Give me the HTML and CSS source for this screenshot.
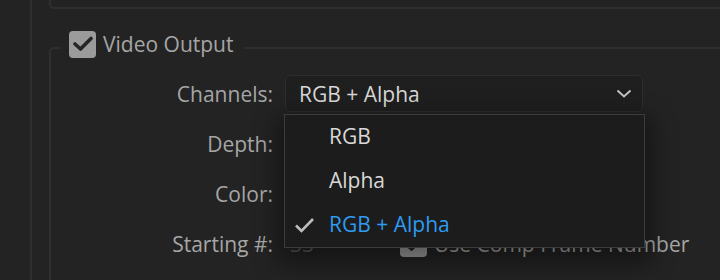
FILE: index.html
```html
<!DOCTYPE html>
<html lang="en">
<head>
  <meta charset="UTF-8" />
  <title>Output Module Settings</title>
  <link rel="stylesheet" href="styles.css">
</head>
<body>
  <div class="panel">
    <div class="top-box"></div>

    <fieldset class="group">
      <legend class="group-title">
        <span class="checkbox"><svg width="20" height="16" viewBox="0 0 20 16"><path d="M2 8 L7.5 13 L18 2.5" fill="none" stroke="#262626" stroke-width="3.6" stroke-linecap="round" stroke-linejoin="round"/></svg></span>
        Video Output
      </legend>

      <div class="rows">
        <label class="row-label">Channels:</label>
        <div class="select-wrap">
          <div class="select">
            <span>RGB + Alpha</span>
            <svg class="chevron" width="16" height="9" viewBox="0 0 16 9"><path d="M1.5 1.5 L8 7.5 L14.5 1.5" fill="none" stroke="#c4c4c4" stroke-width="2"/></svg>
          </div>
          <ul class="menu">
            <li class="menu-item">RGB</li>
            <li class="menu-item">Alpha</li>
            <li class="menu-item selected">
              <svg class="tick" width="21" height="16" viewBox="0 0 21 16"><path d="M2 8.5 L7.5 14 L19 2" fill="none" stroke="#bdbdbd" stroke-width="2.6"/></svg>
              RGB + Alpha
            </li>
          </ul>
        </div>

        <label class="row-label">Depth:</label>
        <div class="select"></div>

        <label class="row-label">Color:</label>
        <div class="select"></div>

        <label class="row-label">Starting #:</label>
        <div class="start-row">
          <span class="hot-text">33</span>
          <span class="check-label">
            <span class="checkbox"><svg width="20" height="16" viewBox="0 0 20 16"><path d="M2 8 L7.5 13 L18 2.5" fill="none" stroke="#262626" stroke-width="3.6" stroke-linecap="round" stroke-linejoin="round"/></svg></span>
            Use Comp Frame Number
          </span>
        </div>
      </div>
    </fieldset>
  </div>
</body>
</html>
```

FILE: styles.css
```css
:root {
  --bg-color: #232323;
  --line-color: #2f2f2f;
  --label-color: #a6a6a6;
  --text-color: #d8d8d8;
  --menu-color: #1c1c1c;
  --accent-color: #2e9bf0;
}
body {
  margin: 0;
  height: 280px;
  overflow: hidden;
  background-color: var(--bg-color);
  font-family: "Open Sans", "Noto Sans", sans-serif;
  font-size: 21px;
  color: var(--label-color);
}
.panel {
  margin-left: 30px;
  height: 280px;
  overflow: hidden;
  border-left: 2px solid var(--line-color);
  padding-left: 17px;
}
.top-box {
  height: 7px;
  border-left: 2px solid var(--line-color);
  border-bottom: 2px solid var(--line-color);
  border-bottom-left-radius: 5px;
}
.group {
  box-sizing: border-box;
  height: 250px;
  margin: 21px 0 0;
  padding: 10px 0 0 0;
  border: 2px solid var(--line-color);
  border-right: none;
  border-bottom: none;
  border-top-left-radius: 5px;
}
.group-title {
  display: flex;
  align-items: center;
  gap: 7px;
  margin-left: 10px;
  padding: 0 12px 7px 8px;
  font-size: 21px;
  line-height: 28px;
  color: var(--label-color);
}
.checkbox {
  display: inline-flex;
  align-items: center;
  justify-content: center;
  flex-shrink: 0;
  width: 27px;
  height: 27px;
  border-radius: 4px;
  background: #9b9b9b;
}
.rows {
  display: grid;
  grid-template-columns: 222px 358px;
  grid-auto-rows: 37px;
  column-gap: 12px;
  row-gap: 13px;
  align-items: center;
}
.row-label {
  text-align: right;
}
.select-wrap {
  position: relative;
  height: 37px;
}
.select {
  box-sizing: border-box;
  height: 37px;
  display: flex;
  align-items: center;
  justify-content: space-between;
  padding: 0 10px 0 13px;
  border: 1px solid #2e2e2e;
  border-radius: 5px;
  background: #1f1f1f;
  color: var(--text-color);
}
.menu {
  position: absolute;
  top: 39px;
  left: -1px;
  width: 359px;
  margin: 0;
  padding: 0;
  list-style: none;
  background: var(--menu-color);
  border: 1px solid #3c3c3c;
  box-shadow: 0 9px 22px 7px rgba(0, 0, 0, 0.4);
  z-index: 10;
}
.menu-item {
  position: relative;
  height: 44px;
  display: flex;
  align-items: center;
  padding-left: 44px;
  padding-bottom: 2px;
  box-sizing: border-box;
  color: var(--text-color);
}
.menu-item.selected {
  color: var(--accent-color);
}
.tick {
  position: absolute;
  left: 9px;
  top: 14px;
}
.start-row {
  display: flex;
  align-items: center;
}
.hot-text {
  flex-shrink: 0;
  box-sizing: border-box;
  width: 115px;
  padding-left: 5px;
  color: #5a5a5a;
}
.check-label {
  display: inline-flex;
  align-items: center;
  gap: 7px;
  color: var(--label-color);
  white-space: nowrap;
}
```
